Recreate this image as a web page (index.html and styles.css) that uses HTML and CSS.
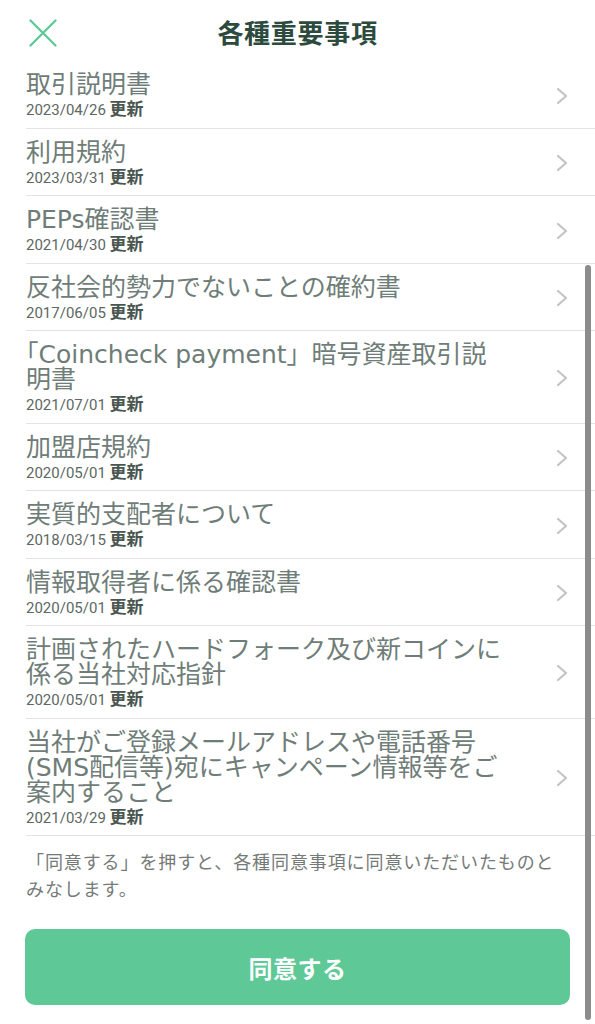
FILE: index.html
```html
<!DOCTYPE html>
<html lang="ja">
<head>
    <meta charset="UTF-8">
    <meta name="viewport" content="width=device-width, initial-scale=1.0">
    <title>各種重要事項</title>
    <link rel="stylesheet" href="styles.css">
</head>
<body>

    <div class="screen">
        <header class="top-bar">
            <button class="close-btn" aria-label="閉じる">
                <svg width="28" height="28" viewBox="0 0 28 28">
                    <path d="M1.5 1.5 L26.5 26.5 M26.5 1.5 L1.5 26.5" />
                </svg>
            </button>
            <h1 class="page-title">各種重要事項</h1>
        </header>

        <ul class="doc-list">
            <li class="doc-item">
                <div class="doc-text">
                    <p class="doc-title">取引説明書</p>
                    <p class="doc-date">2023/04/26 <b>更新</b></p>
                </div>
                <svg class="chevron" viewBox="0 0 12 18"><path d="M2 2 L10 9 L2 16" /></svg>
            </li>
            <li class="doc-item">
                <div class="doc-text">
                    <p class="doc-title">利用規約</p>
                    <p class="doc-date">2023/03/31 <b>更新</b></p>
                </div>
                <svg class="chevron" viewBox="0 0 12 18"><path d="M2 2 L10 9 L2 16" /></svg>
            </li>
            <li class="doc-item">
                <div class="doc-text">
                    <p class="doc-title">PEPs確認書</p>
                    <p class="doc-date">2021/04/30 <b>更新</b></p>
                </div>
                <svg class="chevron" viewBox="0 0 12 18"><path d="M2 2 L10 9 L2 16" /></svg>
            </li>
            <li class="doc-item">
                <div class="doc-text">
                    <p class="doc-title">反社会的勢力でないことの確約書</p>
                    <p class="doc-date">2017/06/05 <b>更新</b></p>
                </div>
                <svg class="chevron" viewBox="0 0 12 18"><path d="M2 2 L10 9 L2 16" /></svg>
            </li>
            <li class="doc-item">
                <div class="doc-text">
                    <p class="doc-title"><span class="half-bracket">「</span>Coincheck payment」暗号資産取引説<br>明書</p>
                    <p class="doc-date">2021/07/01 <b>更新</b></p>
                </div>
                <svg class="chevron" viewBox="0 0 12 18"><path d="M2 2 L10 9 L2 16" /></svg>
            </li>
            <li class="doc-item">
                <div class="doc-text">
                    <p class="doc-title">加盟店規約</p>
                    <p class="doc-date">2020/05/01 <b>更新</b></p>
                </div>
                <svg class="chevron" viewBox="0 0 12 18"><path d="M2 2 L10 9 L2 16" /></svg>
            </li>
            <li class="doc-item">
                <div class="doc-text">
                    <p class="doc-title">実質的支配者について</p>
                    <p class="doc-date">2018/03/15 <b>更新</b></p>
                </div>
                <svg class="chevron" viewBox="0 0 12 18"><path d="M2 2 L10 9 L2 16" /></svg>
            </li>
            <li class="doc-item">
                <div class="doc-text">
                    <p class="doc-title">情報取得者に係る確認書</p>
                    <p class="doc-date">2020/05/01 <b>更新</b></p>
                </div>
                <svg class="chevron" viewBox="0 0 12 18"><path d="M2 2 L10 9 L2 16" /></svg>
            </li>
            <li class="doc-item">
                <div class="doc-text">
                    <p class="doc-title">計画されたハードフォーク及び新コインに<br>係る当社対応指針</p>
                    <p class="doc-date">2020/05/01 <b>更新</b></p>
                </div>
                <svg class="chevron" viewBox="0 0 12 18"><path d="M2 2 L10 9 L2 16" /></svg>
            </li>
            <li class="doc-item">
                <div class="doc-text">
                    <p class="doc-title">当社がご登録メールアドレスや電話番号<br>(SMS配信等)宛にキャンペーン情報等をご<br>案内すること</p>
                    <p class="doc-date">2021/03/29 <b>更新</b></p>
                </div>
                <svg class="chevron" viewBox="0 0 12 18"><path d="M2 2 L10 9 L2 16" /></svg>
            </li>
        </ul>

        <p class="agree-note">「同意する」を押すと、各種同意事項に同意いただいたものとみなします。</p>

        <div class="agree-wrap">
            <button class="agree-btn">同意する</button>
        </div>

        <!-- overlay scroll indicator -->
        <div class="scroll-thumb"></div>
    </div>

</body>
</html>
```

FILE: styles.css
```css
* {
    box-sizing: border-box;
}

body {
    margin: 0;
    background-color: #fff;
    font-family: Roboto, "Noto Sans CJK JP", sans-serif;
    overflow: hidden;
}

.screen {
    position: relative;
    width: 595px;
    height: 1024px;
    overflow: hidden;
}

.top-bar {
    display: grid;
    grid-template-columns: 1fr auto 1fr;
    align-items: center;
    height: 61px;
}

.close-btn {
    justify-self: start;
    margin-left: 29px;
    margin-top: 4px;
    padding: 0;
    border: none;
    background: none;
    line-height: 0;
}

.close-btn path {
    fill: none;
    stroke: #5ec897;
    stroke-width: 2.3;
    stroke-linecap: round;
}

.page-title {
    margin: 2px 0 0;
    font-family: "Noto Sans CJK JP", sans-serif;
    font-size: 26px;
    font-weight: 700;
    letter-spacing: 0.7px;
    color: #2c4a3e;
}

.doc-list {
    list-style: none;
    margin: 0;
    padding: 0;
}

.doc-item {
    display: flex;
    align-items: center;
    gap: 12px;
    margin-left: 26px;
    padding: 11px 27px 8.5px 0;
    border-bottom: 1px solid #e2e4e3;
}

.doc-text {
    flex: 1;
}

.doc-title {
    margin: 0 0 4px;
    font-family: "DejaVu Sans", "Noto Sans CJK JP", sans-serif;
    font-size: 25px;
    line-height: 25px;
    color: #6f7d78;
}

.half-bracket {
    font-feature-settings: "halt";
}

.doc-date {
    height: 18px;
    margin: 0;
    font-size: 15px;
    line-height: 18px;
    color: #5d6763;
}

.doc-date b {
    font-size: 17px;
    line-height: 1;
    font-weight: 700;
    color: #4a5651;
}

.chevron {
    width: 12px;
    height: 18px;
    flex-shrink: 0;
}

.chevron path {
    fill: none;
    stroke: #c3c5c4;
    stroke-width: 2.3;
    stroke-linecap: round;
    stroke-linejoin: round;
}

.agree-note {
    margin: 13px 0 0;
    padding: 0 29px 0 26px;
    font-size: 18px;
    line-height: 27px;
    letter-spacing: 0.9px;
    color: #757a78;
}

.agree-wrap {
    padding: 26px 25px 0 25px;
}

.agree-btn {
    display: block;
    width: 100%;
    height: 76px;
    border: none;
    border-radius: 10px;
    background-color: #5ec897;
    color: #fff;
    font-family: "Noto Sans CJK JP", sans-serif;
    font-size: 24px;
    font-weight: 700;
    letter-spacing: 0.5px;
}

.scroll-thumb {
    position: absolute;
    top: 265px;
    right: 4px;
    width: 6px;
    height: 755px;
    border-radius: 3px;
    background-color: #8c8c8c;
}
```
